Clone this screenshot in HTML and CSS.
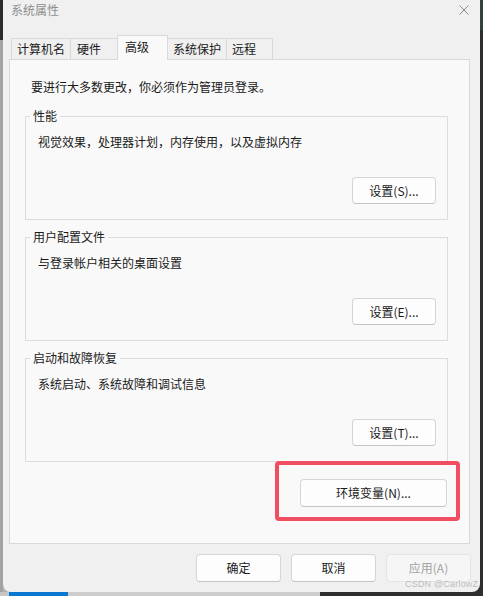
FILE: index.html
```html
<!DOCTYPE html>
<html lang="zh-CN">
<head>
<meta charset="utf-8">
<title>系统属性</title>
<link rel="stylesheet" href="styles.css">
</head>
<body>
<div class="screen">
  <div class="edge-left"></div>
  <div class="window">
    <div class="titlebar">
      <span class="title">系统属性</span>
      <svg class="close" width="10" height="10" viewBox="0 0 10 10"><path d="M0.5 0.5L9.5 9.5M9.5 0.5L0.5 9.5" stroke="#8a8a8a" stroke-width="1" fill="none"/></svg>
    </div>
    <div class="tabs">
      <div class="tab t1">计算机名</div>
      <div class="tab t2">硬件</div>
      <div class="tab t3 active">高级</div>
      <div class="tab t4">系统保护</div>
      <div class="tab t5">远程</div>
    </div>
    <div class="panel">
      <p class="intro">要进行大多数更改，你必须作为管理员登录。</p>
      <fieldset class="group">
        <legend>性能</legend>
        <p class="desc">视觉效果，处理器计划，内存使用，以及虚拟内存</p>
        <div class="row"><button class="btn set">设置(S)...</button></div>
      </fieldset>
      <fieldset class="group">
        <legend>用户配置文件</legend>
        <p class="desc">与登录帐户相关的桌面设置</p>
        <div class="row"><button class="btn set">设置(E)...</button></div>
      </fieldset>
      <fieldset class="group">
        <legend>启动和故障恢复</legend>
        <p class="desc">系统启动、系统故障和调试信息</p>
        <div class="row"><button class="btn set">设置(T)...</button></div>
      </fieldset>
      <div class="env-row">
        <div class="highlight"><button class="btn env">环境变量(N)...</button></div>
      </div>
    </div>
    <div class="actions">
      <button class="btn act">确定</button>
      <button class="btn act">取消</button>
      <button class="btn act disabled">应用(A)</button>
    </div>
  </div>
  <div class="edge-right"></div>
  <div class="edge-bottom"></div>
  <div class="watermark">CSDN @CarlowZ</div>
</div>
</body>
</html>
```
FILE: styles.css
```css
* { box-sizing: border-box; }
html, body { margin: 0; padding: 0; }
body {
  width: 483px;
  height: 596px;
  overflow: hidden;
  background: #2d2f2e;
  font-family: "Noto Sans CJK SC", "Microsoft YaHei", sans-serif;
  font-size: 12px;
  color: #1a1a1a;
}
.screen {
  position: relative;
  display: grid;
  grid-template-columns: 3px 477px 3px;
  grid-template-rows: 592px 4px;
  width: 483px;
  height: 596px;
  background: linear-gradient(to right, #b4b4b4 0 320px, #2d2f2e 320px);
}
.edge-left { background: linear-gradient(#2b2b2b 0 40px, #a3a3a3 40px); }
.edge-right { background: linear-gradient(#34403a 0 30px, #2c2d2e 30px); }
.edge-bottom {
  grid-column: 1 / 4;
  background: linear-gradient(to right, #c6c6c6 0 9px, #0a78d0 9px 68px, #cdcdcd 68px 320px, #2f2f2f 320px);
}
.window {
  background: #f0f0f0;
  border-radius: 0 0 8px 8px;
  display: flex;
  flex-direction: column;
}
.titlebar {
  height: 35px;
  display: flex;
  justify-content: space-between;
  align-items: flex-start;
  padding: 2px 11px 0 8px;
}
.title { color: #8e8e8e; line-height: 16px; }
.close { margin-top: 3px; }
.tabs {
  display: flex;
  align-items: flex-end;
  height: 24px;
  padding-left: 8px;
}
.tab {
  height: 21px;
  border: 1px solid #d9d9d9;
  border-bottom: none;
  border-right: none;
  background: #f0f0f0;
  line-height: 16px;
  padding-top: 2px;
  white-space: nowrap;
}
.tab:last-child { border-right: 1px solid #d9d9d9; }
.tab.active {
  height: 25px;
  margin-bottom: -1px;
  background: #f9f9f9;
  border-right: 1px solid #d9d9d9;
  padding-top: 3px;
  position: relative;
  z-index: 1;
}
.tab.active + .tab { border-left: none; }
.t1 { width: 59px; padding-left: 5px; }
.t2 { width: 47px; padding-left: 6px; }
.t3 { width: 51px; padding-left: 7px; }
.t4 { width: 58px; padding-left: 5px; }
.t5 { width: 47px; padding-left: 5px; }
.panel {
  margin: 0 10px 0 6px;
  height: 485px;
  border: 1px solid #d9d9d9;
  background: #f9f9f9;
  padding: 0 21px 0 15px;
}
.intro { margin: 19px 0 0; padding-left: 6px; line-height: 16px; }
.group {
  margin: 13px 0 0;
  padding: 0 11px 15px 0;
  border: 1px solid #dcdcdc;
  min-width: 0;
}
.group + .group { margin-top: 9px; }
.group legend { margin-left: 4px; padding: 0 3px; line-height: 16px; }
.desc { margin: 10px 0 0; padding-left: 12px; line-height: 16px; }
.row { margin-top: 27px; display: flex; justify-content: flex-end; }
.btn {
  font: inherit;
  color: #1a1a1a;
  background: #fdfdfd;
  border: 1px solid #d6d6d6;
  border-bottom-color: #c4c4c4;
  border-radius: 4px;
  padding: 0;
  height: 28px;
  line-height: 16px;
}
.btn.set { width: 84px; height: 27px; }
.env-row { margin-top: 17px; display: flex; justify-content: flex-end; padding-right: 1px; }
.highlight { position: relative; display: flex; }
.highlight::after {
  content: "";
  position: absolute;
  top: -18px; bottom: -14px; left: -25px; right: -13px;
  border: 4px solid #f24e62;
  border-radius: 4px;
}
.btn.env { width: 147px; }
.actions {
  display: flex;
  justify-content: flex-end;
  gap: 10px;
  margin-top: 10px;
  padding-right: 9px;
}
.btn.act { width: 85px; }
.btn.disabled {
  color: #a3a3a3;
  background: #f6f6f6;
  border-color: #e4e4e4;
}
.watermark {
  position: absolute;
  left: 405px;
  top: 577px;
  font-family: "Liberation Sans", Arial, sans-serif;
  font-size: 9px;
  line-height: 14px;
  letter-spacing: 0.2px;
  color: rgba(150, 150, 150, 0.6);
  white-space: nowrap;
}
```
